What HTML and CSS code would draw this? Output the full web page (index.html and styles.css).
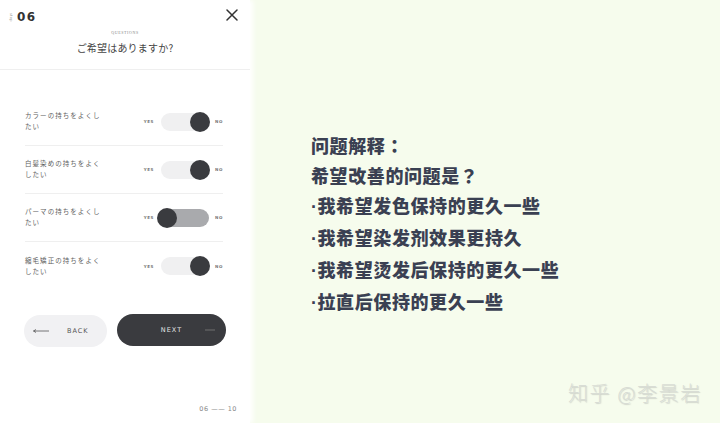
FILE: index.html
```html
<!DOCTYPE html>
<html lang="ja">
<head>
<meta charset="utf-8">
<link rel="stylesheet" href="styles.css">
</head>
<body>
<div class="page">
  <section class="panel">
    <header class="head">
      <div class="topbar">
        <div class="stepnum"><span class="steplabel">step</span><span class="num">06</span></div>
        <svg class="close" width="12" height="12" viewBox="0 0 12 12"><path d="M1 1 L11 11 M11 1 L1 11" stroke="#333" stroke-width="1.5" fill="none" stroke-linecap="round"/></svg>
      </div>
      <div class="kicker">QUESTIONS</div>
      <div class="title">ご希望はありますか?</div>
    </header>
    <div class="list">
      <div class="row">
        <div class="label">カラーの持ちをよくしたい</div>
        <div class="switch"><span class="yn">YES</span><span class="track"><span class="knob on"></span></span><span class="yn">NO</span></div>
      </div>
      <div class="row">
        <div class="label">白髪染めの持ちをよくしたい</div>
        <div class="switch"><span class="yn">YES</span><span class="track"><span class="knob on"></span></span><span class="yn">NO</span></div>
      </div>
      <div class="row">
        <div class="label">パーマの持ちをよくしたい</div>
        <div class="switch"><span class="yn">YES</span><span class="track off"><span class="knob left"></span></span><span class="yn">NO</span></div>
      </div>
      <div class="row last">
        <div class="label">縮毛矯正の持ちをよくしたい</div>
        <div class="switch"><span class="yn">YES</span><span class="track"><span class="knob on"></span></span><span class="yn">NO</span></div>
      </div>
    </div>
    <div class="actions">
      <div class="btn back">
        <svg width="16" height="6" viewBox="0 0 16 6"><path d="M0.5 3 H16 M0.5 3 L3 1.5 M0.5 3 L3 4.5" stroke="#555" stroke-width="0.8" fill="none"/></svg>
        <span>BACK</span>
      </div>
      <div class="btn next">
        <span></span>
        <span class="ntext">NEXT</span>
        <svg class="narrow" width="10" height="4" viewBox="0 0 10 4"><path d="M0 2 H10" stroke="#777" stroke-width="0.9"/></svg>
      </div>
    </div>
    <div class="pager">06 —— 10</div>
  </section>
  <main class="explain">
    <p>问题解释：</p>
    <p>希望改善的问题是？</p>
    <p><span class="dot">·</span>我希望发色保持的更久一些</p>
    <p><span class="dot">·</span>我希望染发剂效果更持久</p>
    <p><span class="dot">·</span>我希望烫发后保持的更久一些</p>
    <p><span class="dot">·</span>拉直后保持的更久一些</p>
  </main>
  <div class="watermark">知乎 @李景岩</div>
</div>
</body>
</html>
```
FILE: styles.css
```css
html, body {
  margin: 0;
  padding: 0;
}
body {
  width: 720px;
  height: 423px;
  overflow: hidden;
  background: #f6fced;
  font-family: "Noto Sans CJK JP", "Noto Sans", sans-serif;
}
.page {
  position: relative;
  display: flex;
  width: 720px;
  height: 423px;
}
.panel {
  width: 250px;
  height: 423px;
  background: #ffffff;
  box-shadow: 3px 0 5px #ffffff;
  display: flex;
  flex-direction: column;
  box-sizing: border-box;
}
.head {
  height: 70px;
  box-sizing: border-box;
  border-bottom: 1px solid #efefef;
  padding-top: 8px;
}
.topbar {
  display: flex;
  justify-content: space-between;
  align-items: center;
  height: 14px;
  padding: 0 12px 0 9px;
}
.stepnum {
  display: flex;
  align-items: center;
  gap: 4px;
  margin-top: 4px;
}
.steplabel {
  writing-mode: vertical-rl;
  font-family: "DejaVu Sans", sans-serif;
  font-size: 3.5px;
  color: #999;
  letter-spacing: 0.3px;
}
.num {
  font-family: "DejaVu Sans", sans-serif;
  font-weight: bold;
  font-size: 12px;
  letter-spacing: 1.5px;
  color: #333;
}
.close {
  display: block;
}
.kicker {
  margin-top: 8px;
  text-align: center;
  font-family: "Liberation Serif", serif;
  font-size: 4px;
  line-height: 6px;
  letter-spacing: 0.6px;
  color: #888;
}
.title {
  margin-top: 5px;
  text-align: center;
  font-size: 10px;
  line-height: 14px;
  color: #444;
  letter-spacing: 0.2px;
}
.list {
  padding: 28px 27px 0 25px;
}
.row {
  height: 48px;
  box-sizing: border-box;
  border-bottom: 1px solid #efefef;
  display: flex;
  align-items: center;
  justify-content: space-between;
}
.row.last {
  border-bottom: none;
}
.label {
  width: 80px;
  font-size: 6.5px;
  line-height: 11px;
  letter-spacing: 1.05px;
  color: #5e5e5e;
  margin-top: -1px;
}
.switch {
  display: flex;
  align-items: center;
}
.yn {
  font-family: "DejaVu Sans", sans-serif;
  font-weight: bold;
  font-size: 4px;
  letter-spacing: 0.6px;
  color: #777;
}
.track {
  position: relative;
  width: 48px;
  height: 18px;
  border-radius: 9px;
  background: #f0f0f1;
  margin: 0 6px 0 7px;
}
.track.off {
  background: #a9aaad;
}
.knob {
  position: absolute;
  top: -1px;
  width: 20px;
  height: 20px;
  border-radius: 50%;
  background: #3a3b3f;
}
.knob.on {
  right: -1px;
}
.knob.left {
  left: -4px;
}
.actions {
  display: flex;
  gap: 10px;
  margin: 25px 0 0 24px;
}
.btn {
  height: 32px;
  border-radius: 16px;
  font-family: "DejaVu Sans", sans-serif;
  font-size: 6.5px;
  letter-spacing: 1px;
}
.back {
  width: 83px;
  background: #f1f1f3;
  color: #555;
  display: flex;
  align-items: center;
  padding-left: 9px;
  box-sizing: border-box;
  gap: 18px;
}
.back svg {
  display: block;
}
.next {
  width: 109px;
  background: #3a3b3f;
  color: #e4e4e4;
  display: grid;
  grid-template-columns: 1fr auto 1fr;
  align-items: center;
  margin-top: -1px;
}
.narrow {
  justify-self: end;
  margin-right: 11px;
  display: block;
}
.pager {
  margin-top: auto;
  padding: 0 13px 10px 0;
  text-align: right;
  font-family: "DejaVu Sans", sans-serif;
  font-size: 6.5px;
  letter-spacing: 0.5px;
  color: #888;
}
.explain {
  padding: 130px 0 0 61px;
  font-family: "Noto Sans CJK SC", sans-serif;
  font-weight: 900;
  font-size: 18px;
  line-height: 30px;
  letter-spacing: 0.6px;
  color: #3a4052;
}
.explain p {
  margin: 0;
}
.dot {
  font-family: "Liberation Sans", sans-serif;
  font-weight: bold;
  letter-spacing: 0.5px;
}
.watermark {
  position: absolute;
  left: 568px;
  top: 379px;
  font-family: "Noto Sans CJK SC", sans-serif;
  font-weight: 300;
  font-size: 20px;
  line-height: 28px;
  letter-spacing: 1.6px;
  color: #d9ddd5;
  text-shadow: 1px 1px 1px rgba(140,140,140,0.35);
}
```
